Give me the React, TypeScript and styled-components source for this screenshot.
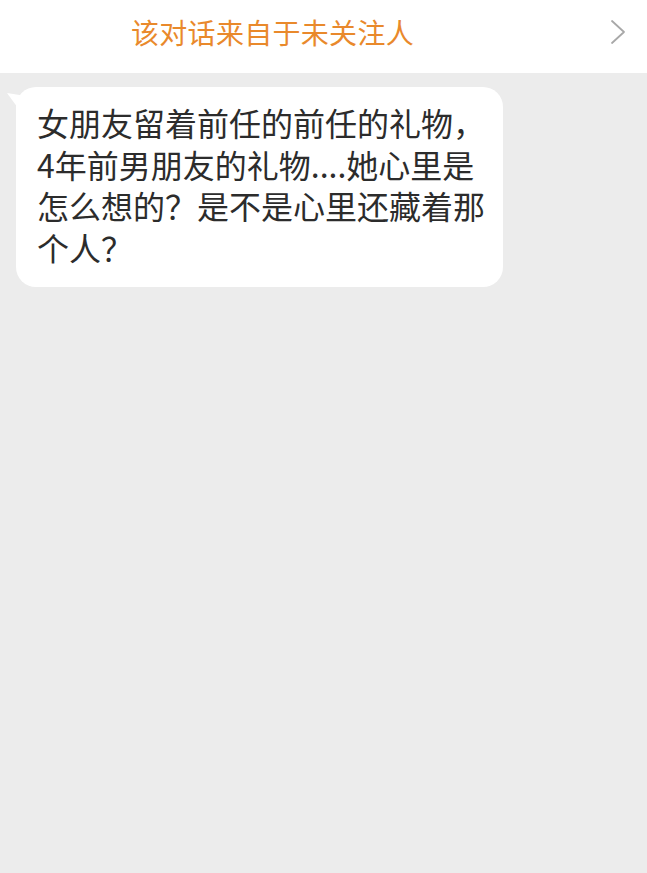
import styled, { createGlobalStyle } from "styled-components";

const Global = createGlobalStyle`
  html, body {
    margin: 0;
    padding: 0;
    background: #ececec;
  }
  body {
    font-family: "Noto Sans CJK SC", "Noto Sans", sans-serif;
  }
`;

const Page = styled.div`
  width: 647px;
  min-height: 873px;
  background: #ececec;
  display: flex;
  flex-direction: column;
`;

const Banner = styled.div`
  height: 73px;
  background: #ffffff;
  display: flex;
  align-items: center;
  padding: 0 21px 10px 131px;
  box-sizing: border-box;
`;

const BannerText = styled.span`
  flex: 1;
  color: #e9892b;
  font-size: 28px;
  line-height: 1;
  letter-spacing: 0.3px;
`;

const Chevron = styled.svg`
  width: 16px;
  height: 26px;
  margin-top: 0;
`;

const Thread = styled.div`
  padding: 14px 0 0 16px;
`;

const Bubble = styled.div`
  position: relative;
  width: 487px;
  box-sizing: border-box;
  background: #ffffff;
  border-radius: 20px;
  padding: 15px 14px 19px 21px;
  color: #2c2c2c;
  font-size: 32px;
  line-height: 41.5px;

  &::before {
    content: "";
    position: absolute;
    left: -9px;
    top: 6px;
    width: 22px;
    height: 18px;
    background: #ffffff;
    clip-path: polygon(0 0, 100% 20%, 60% 100%);
  }
`;

export default function App() {
  return (
    <Page>
      <Global />
      <Banner>
        <BannerText>该对话来自于未关注人</BannerText>
        <Chevron viewBox="0 0 16 26" fill="none">
          <path d="M2 2 L14 13 L2 24" stroke="#a8a8a8" strokeWidth="1.8" strokeLinecap="round" strokeLinejoin="round" />
        </Chevron>
      </Banner>
      <Thread>
        <Bubble>
          女朋友留着前任的前任的礼物，4年前男朋友的礼物....她心里是怎么想的？是不是心里还藏着那个人？
        </Bubble>
      </Thread>
    </Page>
  );
}
